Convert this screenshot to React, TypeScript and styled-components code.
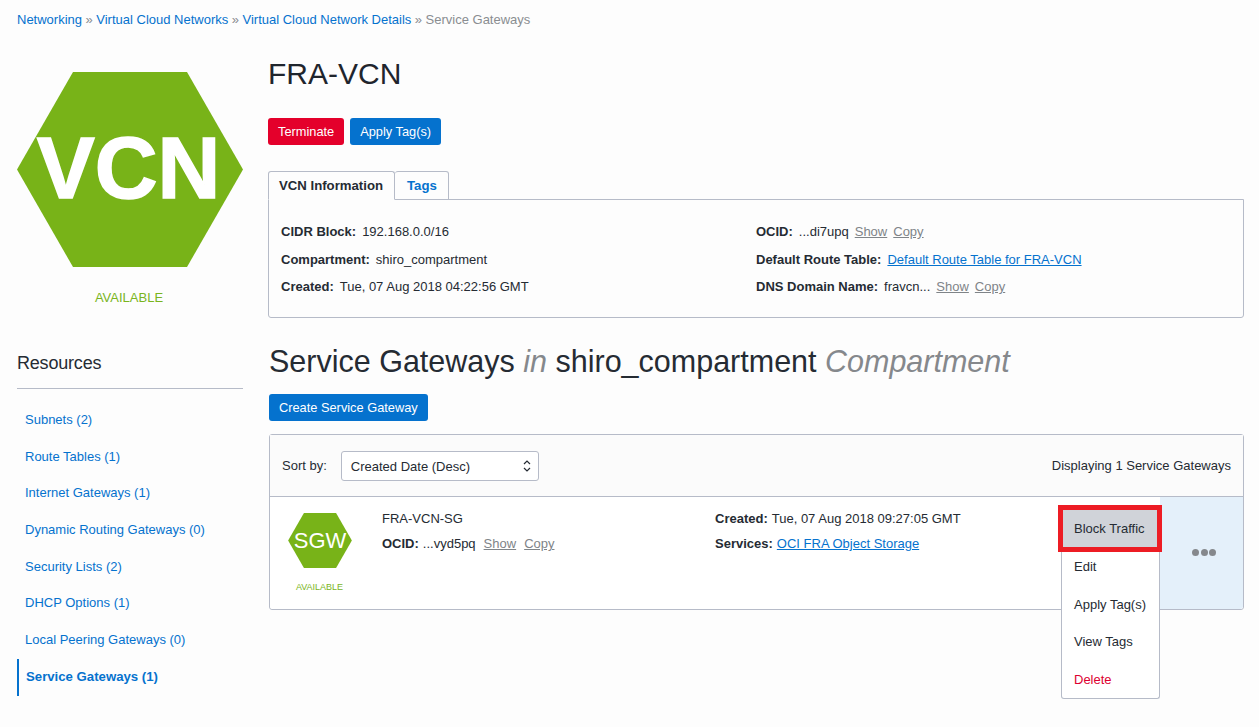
import styled, { createGlobalStyle } from 'styled-components';

const GlobalStyle = createGlobalStyle`
  html, body {
    margin: 0;
    height: 100%;
    overflow: hidden;
    background: #fdfdfd;
  }
  body {
    font-family: 'Liberation Sans', Arial, sans-serif;
    font-size: 13px;
    color: #252b33;
  }
`;

const Page = styled.div`
  width: 1259px;
  height: 727px;
  overflow: hidden;
  padding: 12px 15px 0 17px;
  box-sizing: border-box;
`;

const Breadcrumb = styled.nav`
  height: 15px;
  line-height: 15px;
  font-size: 13px;
  color: #8a8d91;
  white-space: nowrap;
`;

const Crumb = styled.a`
  color: #0572ce;
  text-decoration: none;
`;

const Sep = styled.span`
  margin: 0 3.5px;
`;

const Columns = styled.div`
  display: flex;
  gap: 25px;
  margin-top: 33px;
`;

const Sidebar = styled.aside`
  width: 226px;
  flex: none;
  padding-top: 12px;
`;

const BigBadge = styled.div`
  position: relative;
  width: 226px;
  height: 195px;
`;

const BigLabel = styled.span`
  position: absolute;
  inset: 0;
  display: flex;
  align-items: center;
  justify-content: center;
  color: #fff;
  font-size: 87px;
  font-weight: 700;
  -webkit-text-stroke: 1.5px #fff;
  padding: 0 3px 3px 0;
  box-sizing: border-box;
`;

const StatusText = styled.div<{ $small?: boolean }>`
  text-align: center;
  color: #7ab51d;
  font-size: ${(p) => (p.$small ? '9px' : '13px')};
  margin-top: ${(p) => (p.$small ? '13px' : '23px')};
  margin-right: 2px;
  line-height: ${(p) => (p.$small ? '12px' : '16px')};
`;

const ResourcesTitle = styled.h3`
  margin: 46px 0 0;
  font-size: 18px;
  font-weight: 400;
  line-height: 22px;
  letter-spacing: -0.2px;
  padding-bottom: 14px;
  border-bottom: 1px solid #b6bbc8;
`;

const ResourceList = styled.ul`
  list-style: none;
  margin: 13px 0 0;
  padding: 0;
`;

const ResourceItem = styled.li<{ $active?: boolean }>`
  height: 36.7px;
  line-height: 36.7px;
  padding-left: ${(p) => (p.$active ? '7px' : '8px')};
  color: #0572ce;
  font-size: ${(p) => (p.$active ? '13.2px' : '13px')};
  font-weight: ${(p) => (p.$active ? 700 : 400)};
  border-left: ${(p) => (p.$active ? '2px solid #0572ce' : 'none')};
`;

const ScopeTitle = styled.h3`
  margin: 28px 0 0;
  font-size: 13px;
  font-weight: 700;
  line-height: 16px;
`;

const Main = styled.main`
  flex: 1;
  min-width: 0;
`;

const Title = styled.h1`
  margin: -4px 0 0;
  font-size: 30px;
  font-weight: 400;
  line-height: 36px;
  color: #1f252d;
`;

const ButtonRow = styled.div`
  display: flex;
  gap: 6px;
  margin-top: 26px;
`;

const Button = styled.button<{ $danger?: boolean }>`
  height: 27px;
  padding: 0 10px;
  border: none;
  border-radius: 3px;
  background: ${(p) => (p.$danger ? '#e4002b' : '#0572ce')};
  color: #fff;
  font-family: inherit;
  font-size: 12.8px;
`;

const Tabs = styled.div`
  display: flex;
  margin-top: 26px;
  position: relative;
  z-index: 1;
`;

const Tab = styled.div<{ $active?: boolean }>`
  height: 29px;
  line-height: 27px;
  box-sizing: border-box;
  padding: ${(p) => (p.$active ? '0 11px 0 10px' : '0 11px 0 12px')};
  border: 1px solid #b6bbc8;
  border-bottom: ${(p) => (p.$active ? '1px solid #fdfdfd' : '1px solid #b6bbc8')};
  border-left: ${(p) => (p.$active ? '1px solid #b6bbc8' : 'none')};
  border-radius: 3px 3px 0 0;
  font-weight: 700;
  font-size: 13.2px;
  color: ${(p) => (p.$active ? '#252b33' : '#0572ce')};
  margin-bottom: -1px;
`;

const InfoPanel = styled.div`
  border: 1px solid #b6bbc8;
  border-radius: 0 0 3px 3px;
  height: 119px;
  box-sizing: border-box;
  padding: 18px 12px 0;
  display: grid;
  grid-template-columns: 475px 1fr;
`;

const InfoLine = styled.div`
  height: 27.5px;
  line-height: 27px;
  font-size: 13px;
  white-space: nowrap;
`;

const Key = styled.b`
  font-size: 13px;
  margin-right: 6px;
`;

const RowKey = styled(Key)`
  margin-right: 4px;
`;

const InfoLink = styled.a`
  color: #0572ce;
  text-decoration: underline;
`;

const Muted = styled.a`
  color: #7f8488;
  text-decoration: underline;
  margin-left: 6px;
`;

const RowAction = styled(Muted)`
  margin-left: 8px;
`;

const SectionTitle = styled.h2`
  margin: 25px 0 0 1px;
  font-size: 30.5px;
  font-weight: 400;
  line-height: 36px;
  color: #252b33;
  white-space: nowrap;
`;

const Dim = styled.em`
  color: #85888c;
`;

const CreateRow = styled.div`
  margin-top: 15px;
  padding-left: 1px;
`;

const ListPanel = styled.section`
  margin: 13px 0 0 1px;
  border: 1px solid #b6bbc8;
  border-radius: 3px;
  position: relative;
`;

const Toolbar = styled.div`
  height: 62px;
  box-sizing: border-box;
  padding: 0 12px;
  display: flex;
  align-items: center;
  background: #fbfbfb;
  border-bottom: 1px solid #b6bbc8;
  font-size: 13px;
`;

const SortLabel = styled.span`
  margin-right: 14px;
`;

const SortSelect = styled.div`
  width: 198px;
  height: 30px;
  box-sizing: border-box;
  border: 1px solid #b6bbc8;
  border-radius: 3px;
  background: #fff;
  padding: 1px 7px 0 9px;
  display: flex;
  align-items: center;
  justify-content: space-between;
`;

const Displaying = styled.span`
  margin-left: auto;
`;

const Row = styled.div`
  height: 112px;
  display: flex;
  background: #fff;
  border-radius: 0 0 3px 3px;
`;

const BadgeCell = styled.div`
  width: 100px;
  flex: none;
  padding: 16px 0 0 1px;
  box-sizing: border-box;
`;

const SmallBadge = styled.div`
  position: relative;
  width: 64px;
  height: 55px;
  margin-left: 17px;
`;

const SmallLabel = styled.span`
  position: absolute;
  inset: 0;
  display: flex;
  align-items: center;
  justify-content: center;
  color: #fff;
  font-size: 22px;
`;

const NameCell = styled.div`
  width: 345px;
  flex: none;
  padding: 12px 0 0 12px;
  box-sizing: border-box;
`;

const DetailCell = styled.div`
  padding-top: 12px;
  flex: 1;
  white-space: nowrap;
`;

const RowLine = styled.div`
  height: 25px;
  line-height: 20px;
  font-size: 13px;
  white-space: nowrap;
`;

const KebabCell = styled.div`
  width: 83px;
  flex: none;
  background: #e4f0fa;
  display: flex;
  align-items: center;
  justify-content: center;
  border-radius: 0 0 3px 0;
  padding: 0 0 2px 5px;
  box-sizing: border-box;
`;

const Dots = styled.div`
  display: flex;
  gap: 1.5px;
`;

const Dot = styled.i`
  width: 7px;
  height: 7px;
  border-radius: 50%;
  background: #85888c;
`;

const Menu = styled.ul`
  position: absolute;
  top: 70px;
  left: 791px;
  width: 99px;
  margin: 0;
  padding: 0;
  list-style: none;
  background: #fff;
  border: 1px solid #b6bbc8;
  border-top: none;
  border-radius: 0 0 3px 3px;
  box-sizing: border-box;
`;

const MenuItem = styled.li<{ $danger?: boolean }>`
  height: 37.6px;
  line-height: 37.6px;
  padding-left: 12px;
  font-size: 13px;
  color: ${(p) => (p.$danger ? '#dd0031' : '#252b33')};
`;

const HighlightedItem = styled.li`
  margin: 0 -3px -4px -4px;
  height: 47px;
  line-height: 38px;
  box-sizing: border-box;
  border: 5px solid #ed1c24;
  background: #d0d3d9;
  padding-left: 11px;
  font-size: 13px;
  color: #252b33;
  position: relative;
`;

const Hexagon = () => (
  <svg width="100%" height="100%" viewBox="0 0 226 195" style={{ display: 'block' }}>
    <polygon points="0,97.5 56,0 170,0 226,97.5 170,195 56,195" fill="#78b318" />
  </svg>
);

const resources = [
  'Subnets (2)',
  'Route Tables (1)',
  'Internet Gateways (1)',
  'Dynamic Routing Gateways (0)',
  'Security Lists (2)',
  'DHCP Options (1)',
  'Local Peering Gateways (0)',
];

export default function App() {
  return (
    <Page>
      <GlobalStyle />
      <Breadcrumb>
        <Crumb>Networking</Crumb>
        <Sep>»</Sep>
        <Crumb>Virtual Cloud Networks</Crumb>
        <Sep>»</Sep>
        <Crumb>Virtual Cloud Network Details</Crumb>
        <Sep>»</Sep>
        Service Gateways
      </Breadcrumb>
      <Columns>
        <Sidebar>
          <BigBadge>
            <Hexagon />
            <BigLabel>VCN</BigLabel>
          </BigBadge>
          <StatusText>AVAILABLE</StatusText>
          <ResourcesTitle>Resources</ResourcesTitle>
          <ResourceList>
            {resources.map((r) => (
              <ResourceItem key={r}>{r}</ResourceItem>
            ))}
            <ResourceItem $active>Service Gateways (1)</ResourceItem>
          </ResourceList>
          <ScopeTitle>List Scope</ScopeTitle>
        </Sidebar>
        <Main>
          <Title>FRA-VCN</Title>
          <ButtonRow>
            <Button $danger>Terminate</Button>
            <Button>Apply Tag(s)</Button>
          </ButtonRow>
          <Tabs>
            <Tab $active>VCN Information</Tab>
            <Tab>Tags</Tab>
          </Tabs>
          <InfoPanel>
            <div>
              <InfoLine>
                <Key>CIDR Block:</Key>192.168.0.0/16
              </InfoLine>
              <InfoLine>
                <Key>Compartment:</Key>shiro_compartment
              </InfoLine>
              <InfoLine>
                <Key>Created:</Key>Tue, 07 Aug 2018 04:22:56 GMT
              </InfoLine>
            </div>
            <div>
              <InfoLine>
                <Key>OCID:</Key>...di7upq<Muted>Show</Muted>
                <Muted>Copy</Muted>
              </InfoLine>
              <InfoLine>
                <Key>Default Route Table:</Key>
                <InfoLink>Default Route Table for FRA-VCN</InfoLink>
              </InfoLine>
              <InfoLine>
                <Key>DNS Domain Name:</Key>fravcn...<Muted>Show</Muted>
                <Muted>Copy</Muted>
              </InfoLine>
            </div>
          </InfoPanel>
          <SectionTitle>
            Service Gateways <Dim>in</Dim> shiro_compartment <Dim>Compartment</Dim>
          </SectionTitle>
          <CreateRow>
            <Button>Create Service Gateway</Button>
          </CreateRow>
          <ListPanel>
            <Toolbar>
              <SortLabel>Sort by:</SortLabel>
              <SortSelect>
                Created Date (Desc)
                <svg width="8" height="14" viewBox="0 0 8 14" fill="none" stroke="#252b33" strokeWidth="1.2">
                  <path d="M1 5l3-3 3 3M1 9l3 3 3-3" />
                </svg>
              </SortSelect>
              <Displaying>Displaying 1 Service Gateways</Displaying>
            </Toolbar>
            <Row>
              <BadgeCell>
                <SmallBadge>
                  <Hexagon />
                  <SmallLabel>SGW</SmallLabel>
                </SmallBadge>
                <StatusText $small>AVAILABLE</StatusText>
              </BadgeCell>
              <NameCell>
                <RowLine>FRA-VCN-SG</RowLine>
                <RowLine>
                  <RowKey>OCID:</RowKey>...vyd5pq<RowAction>Show</RowAction>
                  <RowAction>Copy</RowAction>
                </RowLine>
              </NameCell>
              <DetailCell>
                <RowLine>
                  <RowKey>Created:</RowKey>Tue, 07 Aug 2018 09:27:05 GMT
                </RowLine>
                <RowLine>
                  <RowKey>Services:</RowKey>
                  <InfoLink>OCI FRA Object Storage</InfoLink>
                </RowLine>
              </DetailCell>
              <KebabCell>
                <Dots>
                  <Dot />
                  <Dot />
                  <Dot />
                </Dots>
              </KebabCell>
            </Row>
            <Menu>
              <HighlightedItem>Block Traffic</HighlightedItem>
              <MenuItem>Edit</MenuItem>
              <MenuItem>Apply Tag(s)</MenuItem>
              <MenuItem>View Tags</MenuItem>
              <MenuItem $danger>Delete</MenuItem>
            </Menu>
          </ListPanel>
        </Main>
      </Columns>
    </Page>
  );
}
